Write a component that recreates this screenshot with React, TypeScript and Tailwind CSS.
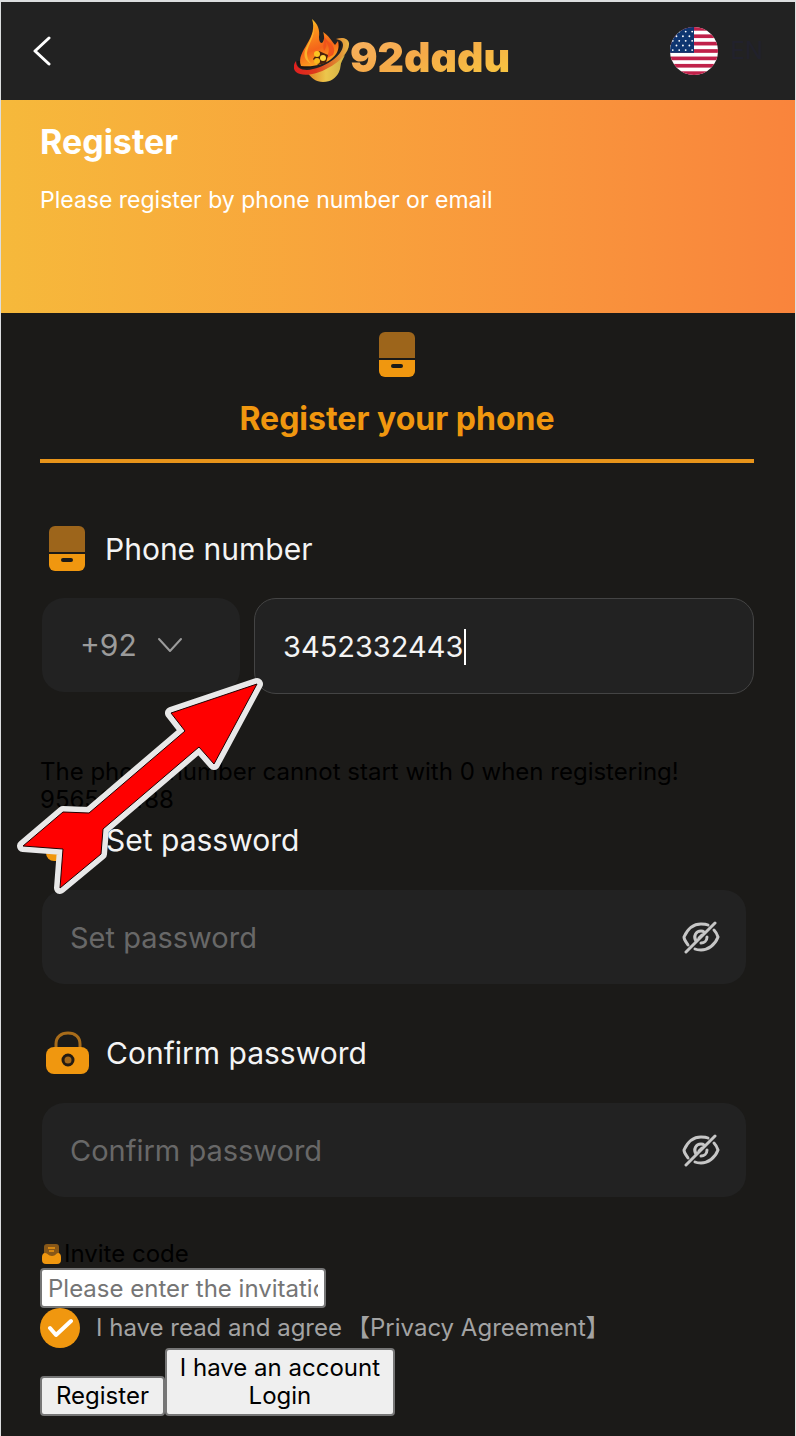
import React, { useState } from "react"

const STRIPES = [0, 2, 4, 6, 8, 10, 12]

function FlameLogo() {
  return (
    <svg width="56" height="64" viewBox="0 0 56 64" fill="none" aria-hidden="true">
      <defs>
        <linearGradient id="flame" x1="0" y1="0" x2="0.3" y2="1">
          <stop offset="0" stopColor="#f6d02c" />
          <stop offset="0.3" stopColor="#fb961c" />
          <stop offset="0.7" stopColor="#f4641a" />
          <stop offset="1" stopColor="#fda01f" />
        </linearGradient>
        <linearGradient id="bowl" x1="0" y1="0" x2="1" y2="0">
          <stop offset="0" stopColor="#e0801f" />
          <stop offset="0.5" stopColor="#ecc64c" />
          <stop offset="1" stopColor="#d0b044" />
        </linearGradient>
        <linearGradient id="ring" x1="0" y1="0" x2="1" y2="0">
          <stop offset="0" stopColor="#e01f1f" />
          <stop offset="0.4" stopColor="#dd3a1c" />
          <stop offset="0.8" stopColor="#e08a30" />
          <stop offset="1" stopColor="#e9b848" />
        </linearGradient>
      </defs>
      <path d="M13 53c4 6 9 10 16 10 8 0 13-4 16-10 2-4 1-8 3-11l3-6-20 14z" fill="url(#bowl)" />
      <path d="M42 20c6-2 12-1 13 4 1 8-9 19-21 25-12 7-26 9-32 4-3-3-3-7 0-11 0 6 4 9 11 9 16-1 36-14 36-25 0-3-2-5-7-6z" fill="url(#ring)" />
      <path d="M3 42c0 6 4 8 10 7 15-1 34-14 34-24 0-1 0-2-2-2-4 10-20 20-42 19z" fill="#1d1511" />
      <path d="M18 0c6 5 8 11 7 18 0 4 1 6 3 6 2-2 3-6 1-11 6 4 8 8 12 13l3-4c2 8-1 14-8 19-8 5-16 7-29 6-3-8 2-15 6-22 5-8 8-16 5-25z" fill="url(#flame)" />
      <path d="M20 8c1 10-6 17-7 26 0 5 2 9 5 11-8-3-9-10-6-16s7-13 8-21z" fill="#fbb12a" />
      <path d="M29 14c3 6-1 11 1 18 2-3 3-6 2-9 4 5 4 11-1 17l8-4c3-6 0-10-4-13-3-3-5-5-6-9z" fill="#f0541b" />
      <path d="M19 40l6-8 9 4-2 8-8 2z" fill="#4a210c" />
      <circle cx="23" cy="35" r="3" fill="#fbc422" />
      <circle cx="29" cy="39" r="3" fill="#fed43a" />
      <circle cx="23" cy="42" r="3" fill="#f8b81c" />
    </svg>
  )
}

function UsFlag() {
  return (
    <svg width="48" height="48" viewBox="0 0 52 52" aria-hidden="true">
      <clipPath id="flagClip">
        <circle cx="26" cy="26" r="26" />
      </clipPath>
      <g clipPath="url(#flagClip)">
        <rect width="52" height="52" fill="#fff" />
        {STRIPES.map((s) => (
          <rect key={s} y={s * 4} width="52" height="4" fill="#c0214a" />
        ))}
        <rect width="26" height="28" fill="#0e3570" />
        {[5, 10, 15, 20, 25].map((y, row) =>
          [3, 10, 17, 24].map((x) => (
            <circle key={`${x}-${y}`} cx={row % 2 ? x - 3 : x} cy={y} r="1" fill="#fff" />
          ))
        )}
      </g>
    </svg>
  )
}

function PhoneIcon() {
  return (
    <svg width="36" height="45" viewBox="0 0 36 45" className="shrink-0" aria-hidden="true">
      <path d="M6 0h24a6 6 0 0 1 6 6v20H0V6a6 6 0 0 1 6-6z" fill="#9d651b" />
      <path d="M0 28h36v11a6 6 0 0 1-6 6H6a6 6 0 0 1-6-6z" fill="#f0970f" />
      <rect x="12" y="32" width="12" height="4" rx="2" fill="#1b1a18" />
    </svg>
  )
}

function LockIcon() {
  return (
    <svg width="44" height="44" viewBox="0 0 44 44" className="shrink-0" aria-hidden="true">
      <path d="M10 18v-5c0-7 5-11 12-11s12 4 12 11v5" fill="none" stroke="#a86c1a" strokeWidth="3" />
      <rect x="0" y="16" width="43" height="27" rx="8" fill="#f0970f" />
      <circle cx="22" cy="29" r="5" fill="#a3681a" stroke="#231b12" strokeWidth="3" />
    </svg>
  )
}

function InviteIcon() {
  return (
    <svg width="20" height="20" viewBox="0 0 20 20" className="ml-0.5 shrink-0" aria-hidden="true">
      <rect x="2" y="0" width="15" height="14" rx="3" fill="#875718" />
      <path d="M6 4h7M7 7h5" stroke="#f0970f" strokeWidth="1.500" />
      <path d="M3 9c3 0 3 3 7 3s4-3 6-3c2 0 3 2 3 4v3a4 4 0 0 1-4 4H4a4 4 0 0 1-4-4v-3c0-2 1-4 3-4z" fill="#f0970f" />
    </svg>
  )
}

function EyeOffIcon() {
  return (
    <svg width="38" height="34" viewBox="0 0 38 34" fill="none" stroke="#c6c6c6" strokeWidth="3" strokeLinecap="round" aria-hidden="true">
      <path d="M6 25c-2-3-4-5-4-8C6 8 12 4 19 4c3 0 5 0 7 1" />
      <path d="M32 10c2 2 3 4 4 7-3 8-10 13-17 13-2 0-4 0-6-1" />
      <path d="M14 21c-3-5 0-10 5-10 1 0 2 0 3 1" />
      <path d="M25 17c0 4-3 6-6 6" />
      <path d="M17 18l3-3" />
      <path d="M4 32L33 3" />
    </svg>
  )
}

function PasswordField({ id, label }: { id: string; label: string }) {
  const [visible, setVisible] = useState(false)

  return (
    <div>
      <label htmlFor={id} className="flex h-11 items-center gap-4 pl-1.5 text-[30px] text-[#f4f4f4]">
        <LockIcon />
        {label}
      </label>
      <div className="mr-2 ml-0.5 mt-7 flex h-[94px] items-center rounded-[22px] bg-[#222] pr-[26px] pl-7">
        <input
          id={id}
          type={visible ? "text" : "password"}
          placeholder={label}
          className="min-w-0 flex-1 bg-transparent text-[29px] text-white outline-none placeholder:text-[#686868]"
        />
        <button type="button" aria-label="Toggle password visibility" onClick={() => setVisible(!visible)}>
          <EyeOffIcon />
        </button>
      </div>
    </div>
  )
}

export default function App() {
  const [phone, setPhone] = useState("3452332443")

  return (
    <div className="relative min-h-screen border-x border-t-2 border-[#dcdedf] bg-[#1b1a18] font-['Inter','Noto_Sans_CJK_SC',sans-serif] text-2xl leading-7 text-black">
      {/* Top bar */}
      <header className="grid h-[98px] grid-cols-[1fr_auto_1fr] items-center bg-[#222] pr-6 pl-8">
        <button type="button" aria-label="Back" className="justify-self-start">
          <svg width="18" height="30" viewBox="0 0 18 30" fill="none" stroke="#fff" strokeWidth="3" strokeLinecap="round" strokeLinejoin="round">
            <path d="M16 2L2 15l14 13" />
          </svg>
        </button>
        <div className="flex items-center">
          <FlameLogo />
          <span className="bg-gradient-to-br from-[#f9b368] via-[#f5aa48] to-[#f7c93f] bg-clip-text pt-3 text-[41px] leading-[48px] font-black text-transparent [font-feature-settings:'cv11']">
            92dadu
          </span>
        </div>
        <button type="button" className="mr-2 flex items-center gap-3 justify-self-end text-[#21212c]">
          <UsFlag />
          EN
        </button>
      </header>

      <section className="h-[213px] bg-gradient-to-r from-[#f6b93b] to-[#f9843c] px-[39px] pt-6 text-white">
        <h1 className="text-[34px] leading-9 font-bold">Register</h1>
        <p className="mt-[26px] text-[23px]">Please register by phone number or email</p>
      </section>

      <form className="pr-[41px] pb-5 pl-[39px]" onSubmit={(e) => e.preventDefault()}>
        <div className="flex flex-col items-center border-b-4 border-[#e8941a] pt-[19px] pb-[22px] text-[#f0970f]">
          <PhoneIcon />
          <h2 className="mt-6 text-[32px] leading-9 font-bold">Register your phone</h2>
        </div>

        {/* Phone number */}
        <label htmlFor="phone" className="mt-[63px] flex h-[45px] items-center gap-5 pl-[9px] text-[30px] text-[#f4f4f4]">
          <PhoneIcon />
          Phone number
        </label>
        <div className="mt-[27px] flex h-24 gap-3.5 pl-0.5">
          <button type="button" className="flex h-[94px] w-[198px] items-center gap-5 rounded-[22px] bg-[#222] pl-[38px] text-[30px] text-[#9b9b9b]">
            +92
            <svg width="26" height="16" viewBox="0 0 26 16" fill="none" stroke="#9b9b9b" strokeWidth="2" strokeLinecap="round" strokeLinejoin="round" aria-hidden="true">
              <path d="M2 2l11 12L24 2" />
            </svg>
          </button>
          <div className="relative flex min-w-0 flex-1 items-center rounded-[22px] border border-[#444] bg-[#222] px-7">
            <input
              id="phone"
              type="tel"
              value={phone}
              onChange={(e) => setPhone(e.target.value)}
              className="w-full bg-transparent text-[29px] text-[#f4f4f4] outline-none"
            />
            <span className="absolute top-[30px] left-[209px] h-9 w-0.5 bg-white" />
          </div>
        </div>

        <p className="mt-16">
          The phone number cannot start with 0 when registering!
          <br />
          956563488
        </p>

        <div className="mt-1 space-y-[47px]">
          <PasswordField id="password" label="Set password" />
          <PasswordField id="confirm" label="Confirm password" />
        </div>

        {/* Invite code and agreement */}
        <label htmlFor="invite" className="mt-[43px] flex items-center gap-0.5">
          <InviteIcon />
          Invite code
        </label>
        <input
          id="invite"
          type="text"
          placeholder="Please enter the invitation code"
          className="block h-10 w-[286px] rounded border-2 border-[#767676] bg-white px-1.5 placeholder:text-[#757575]"
        />
        <div className="flex items-center text-[#a3a3a3]">
          <label className="flex items-center gap-4">
            <span className="grid size-10 place-items-center">
              <input type="checkbox" defaultChecked className="peer col-start-1 row-start-1 size-10 appearance-none rounded-full bg-[#f0970f]" />
              <svg width="26" height="20" viewBox="0 0 26 20" fill="none" stroke="#fff" strokeWidth="4" strokeLinecap="round" strokeLinejoin="round" className="pointer-events-none invisible col-start-1 row-start-1 peer-checked:visible" aria-hidden="true">
                <path d="M3 10l6 7L24 3" />
              </svg>
            </span>
            I have read and agree
          </label>
          <a href="#privacy" className="ml-1">【Privacy Agreement】</a>
        </div>
        <div className="flex items-end">
          <button type="submit" className="h-10 rounded border-2 border-[#767676] bg-[#efefef] px-3.5">
            Register
          </button>
          <button type="button" className="w-[230px] rounded border-2 border-[#767676] bg-[#efefef] px-3 py-1">
            I have an account Login
          </button>
        </div>
      </form>

      {/* Pointer over the phone field */}
      <svg width="260" height="230" viewBox="10 670 260 230" className="pointer-events-none absolute top-[668px] left-[9px]" aria-hidden="true">
        <path
          d="M257 684L171 713l14 18-96 82-26-1-40 34 40 3-3 39 41-34 2-25 96-82 15 17z"
          fill="#e8e8e8"
          stroke="#e8e8e8"
          strokeWidth="12"
          strokeLinejoin="round"
        />
        <path d="M257 684L171 713l14 18-96 82-26-1-40 34 40 3-3 39 41-34 2-25 96-82 15 17z" fill="#f00" stroke="#200" />
      </svg>
    </div>
  )
}
